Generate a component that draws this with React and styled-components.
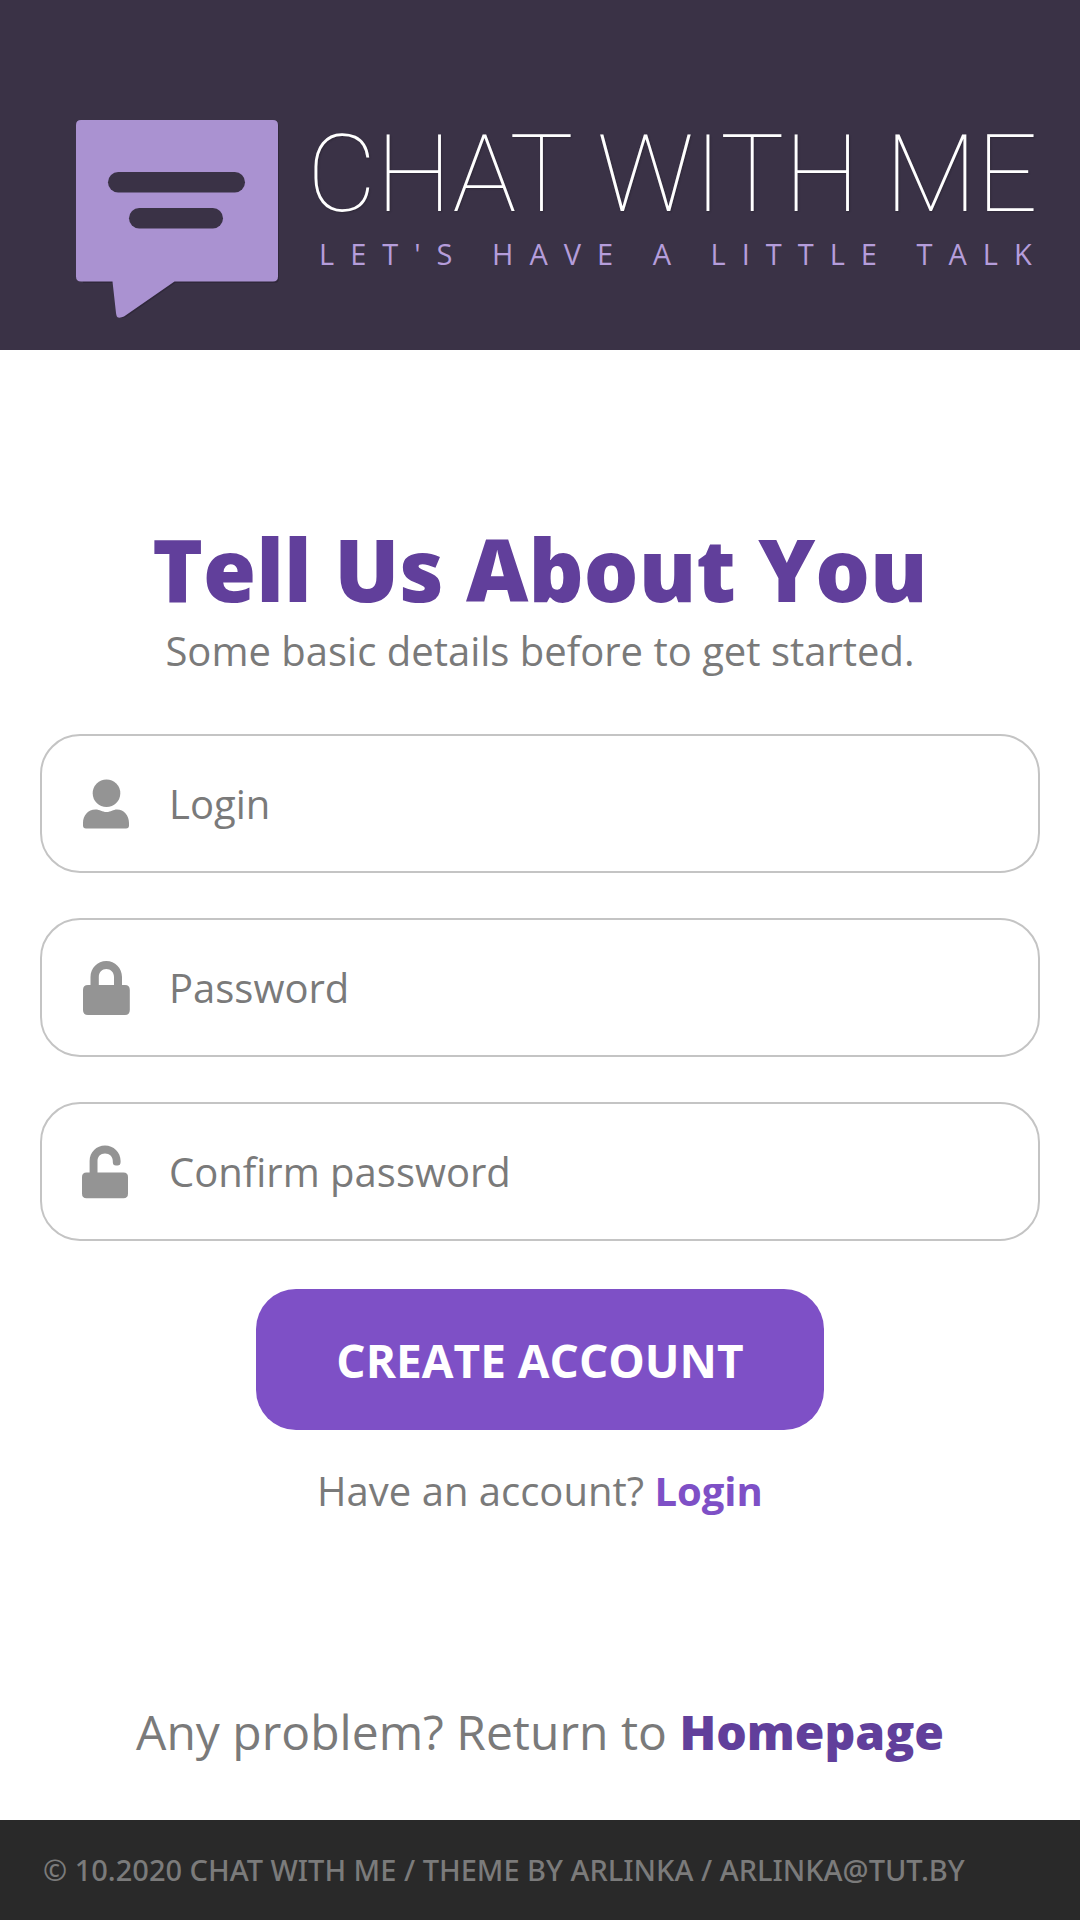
import React from "react";
import styled, { createGlobalStyle } from "styled-components";

const GlobalStyle = createGlobalStyle`
  *, *::before, *::after { box-sizing: border-box; }
  body {
    margin: 0;
    background: #ffffff;
    color: #7a7a7a;
    font-family: "Open Sans", "Noto Sans", sans-serif;
  }
`;

const Page = styled.div`
  min-height: 100vh;
  display: flex;
  flex-direction: column;
`;

const Header = styled.header`
  display: flex;
  align-items: flex-start;
  gap: 27px;
  padding: 120px 32px 32px 76px;
  background: #3a3246;
`;

const Logo = styled.svg`
  flex: none;
  width: 204px;
  height: 198px;
`;

const Brand = styled.div`
  display: flex;
  flex-direction: column;
  gap: 6px;
  white-space: nowrap;
`;

const BrandName = styled.div`
  font-family: Roboto, sans-serif;
  font-size: 107px;
  font-weight: 100;
  line-height: 110px;
  color: #ffffff;
  text-shadow: 1px 1px 2px rgba(0, 0, 0, 0.2);
`;

const Tagline = styled.div`
  padding-left: 12px;
  font-size: 29px;
  line-height: 36px;
  letter-spacing: 16px;
  color: #b59ddb;
`;

const Main = styled.main`
  flex: 1;
  display: flex;
  flex-direction: column;
  align-items: center;
  padding: 164px 40px 56px;
`;

const Title = styled.h1`
  margin: 0;
  font-size: 86px;
  font-weight: 800;
  line-height: 110px;
  color: #613f9b;
`;

const Text = styled.p`
  margin: 0;
  font-size: ${(p) => (p.$large ? "48px" : "40px")};
  line-height: ${(p) => (p.$large ? "64px" : "54px")};
`;

const Form = styled.form`
  align-self: stretch;
  display: flex;
  flex-direction: column;
  align-items: center;
  gap: 45px;
  margin: 56px 0 34px;
`;

const Field = styled.label`
  align-self: stretch;
  display: flex;
  align-items: center;
  gap: 39px;
  height: 139px;
  padding: 0 40px;
  border: 2px solid #c4c4c4;
  border-radius: 40px;
`;

const FieldIcon = styled.svg`
  flex: none;
  width: 48px;
  height: 54px;
  fill: #949494;
`;

const Input = styled.input`
  flex: 1;
  min-width: 0;
  padding: 0;
  border: 0;
  outline: 0;
  background: transparent;
  font: inherit;
  font-size: 40px;
  line-height: 54px;
  color: #7a7a7a;

  &::placeholder {
    color: #7a7a7a;
    opacity: 1;
  }
`;

const SubmitButton = styled.button`
  margin-top: 3px;
  height: 141px;
  padding: 0 80px;
  border: 0;
  border-radius: 40px;
  background: #7e50c6;
  color: #ffffff;
  font-family: inherit;
  font-size: 46px;
  font-weight: 700;
  cursor: pointer;
`;

const Link = styled.a`
  color: ${(p) => (p.$strong ? "#613f9b" : "#7e50c6")};
  font-weight: ${(p) => (p.$strong ? 800 : 700)};
  text-decoration: none;
`;

const Help = styled.div`
  margin-top: auto;
`;

const Footer = styled.footer`
  padding: 31px 43px;
  background: #292929;
  color: #7b7b7b;
  font-family: "Noto Sans", "Open Sans", sans-serif;
  font-size: 29px;
  font-weight: 500;
  line-height: 38px;
`;

const UserIcon = () => (
  <FieldIcon viewBox="0 0 48 54" aria-hidden="true">
    <circle cx="24.500" cy="16.200" r="13.800" />
    <path d="M1 46C1 38.500 6 32.500 13.500 32.500C18 32.500 20 35 24.500 35S31 32.500 35 32.500C42 32.500 47 38.500 47 46V48.500Q47 51.500 44 51.500H4Q1 51.500 1 48.500Z" />
  </FieldIcon>
);

const LockIcon = () => (
  <FieldIcon viewBox="0 0 48 54" aria-hidden="true">
    <path
      fillRule="evenodd"
      d="M8.500 24V16C8.500 7 15.500 0 24.300 0S40 7 40 16V24H43Q47.800 24 47.800 29V49Q47.800 54 43 54H6Q1 54 1 49V29Q1 24 6 24ZM16.800 24H32V16C32 11 28.500 8 24.300 8S16.800 11 16.800 16Z"
    />
  </FieldIcon>
);

const UnlockIcon = () => (
  <FieldIcon viewBox="0 0 48 54" aria-hidden="true">
    <path d="M7.600 27.500V16C7.600 7 14.500 .5 23 .5S38.600 7 38.600 16V17Q38.600 20.500 35.500 20.500H34Q30.800 20.500 30.800 17V16C30.800 11.500 27.500 8.500 23 8.500S15.500 11.500 15.500 16V27.500H41.500Q46 27.500 46 32V48.500Q46 53.300 41.500 53.300H4.500Q0 53.300 0 48.500V32Q0 27.500 4.500 27.500Z" />
  </FieldIcon>
);

const fields = [
  { name: "login", label: "Login", type: "text", Icon: UserIcon },
  { name: "password", label: "Password", type: "password", Icon: LockIcon },
  { name: "confirm", label: "Confirm password", type: "password", Icon: UnlockIcon },
];

export default function App() {
  return (
    <Page>
      <GlobalStyle />
      <Header>
        <Logo viewBox="0 0 204 198" role="img" aria-label="Chat bubble">
          <path
            fill="#251e30"
            opacity="0.5"
            d="M7 2H199Q203 2 203 7V158Q203 163 199 163H99L50 197Q45 199 42 198L38 163H7Z"
          />
          <path
            fill="#aa92d1"
            d="M5 0H197Q202 0 202 5V156.500Q202 161.500 197 161.500H98.500L48 196.500Q45 198 42 197.500Q40.500 197 40 193L36.500 161.500H5Q0 161.500 0 156.500V5Q0 0 5 0Z"
          />
          <rect x="32" y="52" width="137" height="20.500" rx="10.200" fill="#3a3246" />
          <rect x="53" y="88" width="94" height="20.500" rx="10.200" fill="#3a3246" />
        </Logo>
        <Brand>
          <BrandName>CHAT WITH ME</BrandName>
          <Tagline>LET'S HAVE A LITTLE TALK</Tagline>
        </Brand>
      </Header>
      <Main>
        <Title>Tell Us About You</Title>
        <Text>Some basic details before to get started.</Text>
        <Form onSubmit={(e) => e.preventDefault()}>
          {fields.map(({ name, label, type, Icon }) => (
            <Field key={name} htmlFor={name}>
              <Icon />
              <Input id={name} name={name} type={type} placeholder={label} aria-label={label} />
            </Field>
          ))}
          <SubmitButton type="submit">CREATE ACCOUNT</SubmitButton>
        </Form>
        <Text>
          Have an account? <Link href="#login">Login</Link>
        </Text>
        <Help>
          <Text $large>
            Any problem? Return to <Link $strong href="#home">Homepage</Link>
          </Text>
        </Help>
      </Main>
      <Footer>© 10.2020 CHAT WITH ME / THEME BY ARLINKA / ARLINKA@TUT.BY</Footer>
    </Page>
  );
}
